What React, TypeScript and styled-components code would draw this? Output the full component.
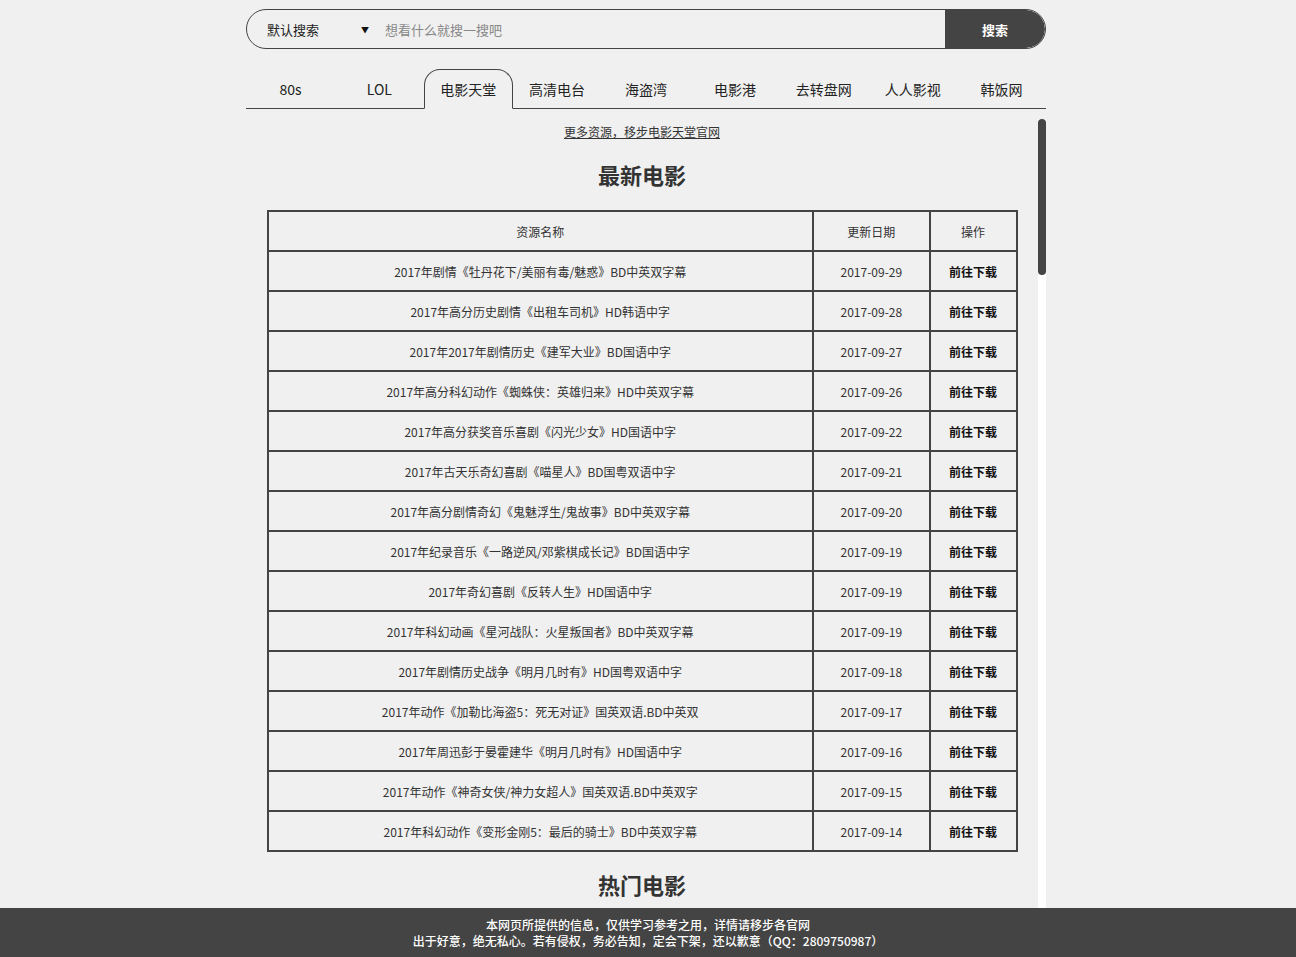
import React from "react";
import styled, { createGlobalStyle } from "styled-components";

const GlobalStyle = createGlobalStyle`
  html, body {
    margin: 0;
    padding: 0;
    background: #f0f0f0;
    overflow: hidden;
  }
  body {
    font-family: "Noto Sans CJK SC", "Noto Sans", "Liberation Sans", sans-serif;
    color: #333;
  }
`;

const tabs = ["80s", "LOL", "电影天堂", "高清电台", "海盗湾", "电影港", "去转盘网", "人人影视", "韩饭网"];

const latest: [string, string][] = [
  ["2017年剧情《牡丹花下/美丽有毒/魅惑》BD中英双字幕", "2017-09-29"],
  ["2017年高分历史剧情《出租车司机》HD韩语中字", "2017-09-28"],
  ["2017年2017年剧情历史《建军大业》BD国语中字", "2017-09-27"],
  ["2017年高分科幻动作《蜘蛛侠：英雄归来》HD中英双字幕", "2017-09-26"],
  ["2017年高分获奖音乐喜剧《闪光少女》HD国语中字", "2017-09-22"],
  ["2017年古天乐奇幻喜剧《喵星人》BD国粤双语中字", "2017-09-21"],
  ["2017年高分剧情奇幻《鬼魅浮生/鬼故事》BD中英双字幕", "2017-09-20"],
  ["2017年纪录音乐《一路逆风/邓紫棋成长记》BD国语中字", "2017-09-19"],
  ["2017年奇幻喜剧《反转人生》HD国语中字", "2017-09-19"],
  ["2017年科幻动画《星河战队：火星叛国者》BD中英双字幕", "2017-09-19"],
  ["2017年剧情历史战争《明月几时有》HD国粤双语中字", "2017-09-18"],
  ["2017年动作《加勒比海盗5：死无对证》国英双语.BD中英双", "2017-09-17"],
  ["2017年周迅彭于晏霍建华《明月几时有》HD国语中字", "2017-09-16"],
  ["2017年动作《神奇女侠/神力女超人》国英双语.BD中英双字", "2017-09-15"],
  ["2017年科幻动作《变形金刚5：最后的骑士》BD中英双字幕", "2017-09-14"],
];

const Wrap = styled.div`
  width: 804px;
  padding-right: 4px;
  box-sizing: border-box;
  margin: 0 auto;
  padding-top: 9px;
`;

const SearchBar = styled.form`
  display: flex;
  height: 40px;
  box-sizing: border-box;
  border: 1px solid #444;
  border-radius: 20px;
  overflow: hidden;
`;

const Select = styled.div`
  width: 128px;
  display: flex;
  align-items: center;
  justify-content: space-between;
  padding: 0 6px 0 20px;
  box-sizing: border-box;
  font-size: 13px;
  color: #222;
`;

const Arrow = styled.span`
  font-size: 8px;
  color: #111;
`;

const Input = styled.input`
  flex: 1;
  border: none;
  outline: none;
  background: transparent;
  padding: 0 10px;
  font-family: inherit;
  font-size: 13px;
  color: #333;
  &::placeholder {
    color: #888;
  }
`;

const SearchButton = styled.button`
  width: 100px;
  border: none;
  background: #444;
  color: #fff;
  font-family: inherit;
  font-size: 13px;
  font-weight: 700;
  border-radius: 0 20px 20px 0;
`;

const TabBar = styled.ul`
  display: flex;
  list-style: none;
  margin: 20px 0 0;
  padding: 0;
  height: 39px;
  border-bottom: 1px solid #444;
`;

const Tab = styled.li<{ $active?: boolean }>`
  flex: 1;
  display: flex;
  align-items: center;
  justify-content: center;
  font-size: 14px;
  color: #222;
  box-sizing: border-box;
  height: 40px;
  border: 1px solid ${(p) => (p.$active ? "#444" : "transparent")};
  border-bottom: 1px solid ${(p) => (p.$active ? "#f0f0f0" : "transparent")};
  border-radius: 16px 16px 0 0;
`;

const ScrollArea = styled.div`
  margin-top: 10px;
  height: calc(100vh - 119px);
  display: flex;
`;

const Content = styled.div`
  flex: 1;
  overflow: hidden;
  text-align: center;
  padding-top: 3px;
`;

const ScrollTrack = styled.div`
  width: 8px;
  background: #fff;
  display: flex;
  flex-direction: column;
`;

const ScrollThumb = styled.div`
  height: 156px;
  border-radius: 4px;
  background: #444;
`;

const LinkRow = styled.div`
  font-size: 12px;
  line-height: 20px;
`;

const MoreLink = styled.a`
  color: #333;
  text-decoration: underline;
`;

const SectionTitle = styled.h2`
  margin: 17px 0 21px;
  font-size: 22px;
  line-height: 30px;
  font-weight: 700;
  color: #333;
`;

const Table = styled.table`
  width: 751px;
  margin: 0 auto 5px;
  border-collapse: collapse;
  border: 2px solid #444;
  font-size: 12px;
  color: #333;
`;

const Cell = styled.td<{ $bold?: boolean }>`
  border: 2px solid #444;
  height: 38px;
  padding: 0;
  text-align: center;
  font-weight: ${(p) => (p.$bold ? 700 : 400)};
  color: ${(p) => (p.$bold ? "#111" : "#333")};
`;

const HeadCell = styled.th`
  border: 2px solid #444;
  height: 38px;
  padding: 0;
  font-weight: 400;
  color: #333;
`;

const Footer = styled.footer`
  position: fixed;
  left: 0;
  right: 0;
  bottom: 0;
  height: 49px;
  box-sizing: border-box;
  padding-top: 9px;
  background: #444;
  color: #fff;
  font-size: 12px;
  line-height: 16px;
  text-align: center;
  font-weight: 500;
`;

const MovieTable: React.FC<{ rows: [string, string][] }> = ({ rows }) => (
  <Table>
    <colgroup>
      <col style={{ width: 547 }} />
      <col style={{ width: 117 }} />
      <col style={{ width: 87 }} />
    </colgroup>
    <thead>
      <tr>
        <HeadCell>资源名称</HeadCell>
        <HeadCell>更新日期</HeadCell>
        <HeadCell>操作</HeadCell>
      </tr>
    </thead>
    <tbody>
      {rows.map(([name, date], i) => (
        <tr key={i}>
          <Cell>{name}</Cell>
          <Cell>{date}</Cell>
          <Cell $bold>前往下载</Cell>
        </tr>
      ))}
    </tbody>
  </Table>
);

export default function App() {
  return (
    <>
      <GlobalStyle />
      <Wrap>
        <SearchBar onSubmit={(e) => e.preventDefault()}>
          <Select>
            默认搜索
            <Arrow>▼</Arrow>
          </Select>
          <Input placeholder="想看什么就搜一搜吧" />
          <SearchButton type="submit">搜索</SearchButton>
        </SearchBar>
        <TabBar>
          {tabs.map((t) => (
            <Tab key={t} $active={t === "电影天堂"}>
              {t}
            </Tab>
          ))}
        </TabBar>
        <ScrollArea>
          <Content>
            <LinkRow>
              <MoreLink href="#">更多资源，移步电影天堂官网</MoreLink>
            </LinkRow>
            <SectionTitle>最新电影</SectionTitle>
            <MovieTable rows={latest} />
            <SectionTitle>热门电影</SectionTitle>
            <MovieTable rows={latest} />
          </Content>
          <ScrollTrack>
            <ScrollThumb />
          </ScrollTrack>
        </ScrollArea>
      </Wrap>
      <Footer>
        <div>本网页所提供的信息，仅供学习参考之用，详情请移步各官网</div>
        <div>出于好意，绝无私心。若有侵权，务必告知，定会下架，还以歉意（QQ：2809750987）</div>
      </Footer>
    </>
  );
}
